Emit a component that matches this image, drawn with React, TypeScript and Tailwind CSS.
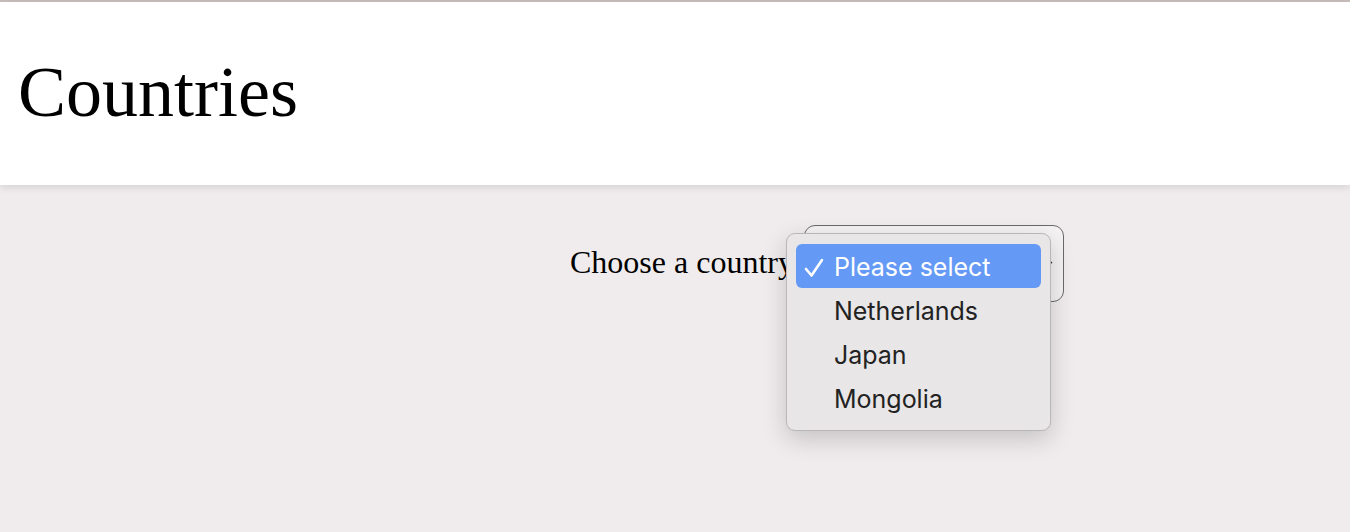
import { useState } from 'react';

const options = ['Please select', 'Netherlands', 'Japan', 'Mongolia'];

export default function App() {
  const [selected] = useState(0);

  return (
    <div className="min-h-[532px] bg-[#f0eced] border-t-2 border-[#c9bfbc] font-['Liberation_Serif',serif]">
      <header className="h-[183px] bg-white flex items-center pl-[18px] shadow-[0_2px_8px_rgba(0,0,0,0.12)] relative">
        <h1 className="text-[72px] leading-none text-black mt-[-4px]">Countries</h1>
      </header>
      <main className="pt-10 pl-[570px]">
        <div className="flex items-center">
          <label className="text-[32px] text-black mt-[-3px]">Choose a country</label>
          <div className="relative ml-[10px] w-[260px] h-[77px] rounded-[11px] border-[1.5px] border-[#6a6a6a] bg-[#f4f2f3] flex items-center justify-end pr-[8px]">
            <svg width="10" height="10" viewBox="0 0 10 10" className="mr-[2px]">
              <path d="M1 3 L5 7 L9 3" fill="none" stroke="#333" strokeWidth="1.3" />
            </svg>
            <div className="absolute left-[-19px] top-[7px] w-[265px] rounded-[9px] border border-[#b9b6b7] bg-[#e8e6e7] shadow-[0_8px_24px_rgba(0,0,0,0.18)] py-[10px] px-[9px] font-['Inter',sans-serif]">
              {options.map((o, i) => (
                <div
                  key={o}
                  className={
                    i === selected
                      ? 'h-[44px] rounded-[6px] bg-[#6499f5] text-white flex items-center text-[25px] pt-[3px]'
                      : 'h-[44px] text-[#222] flex items-center text-[25px] pt-[3px]'
                  }
                >
                  <span className="w-[38px] pl-[8px] flex items-center">
                    {i === selected && (
                      <svg width="20" height="20" viewBox="0 0 20 20">
                        <path d="M2 11 L7.5 17.5 L18 2" fill="none" stroke="white" strokeWidth="2.6" strokeLinecap="round" strokeLinejoin="round" />
                      </svg>
                    )}
                  </span>
                  {o}
                </div>
              ))}
            </div>
          </div>
        </div>
      </main>
    </div>
  );
}
